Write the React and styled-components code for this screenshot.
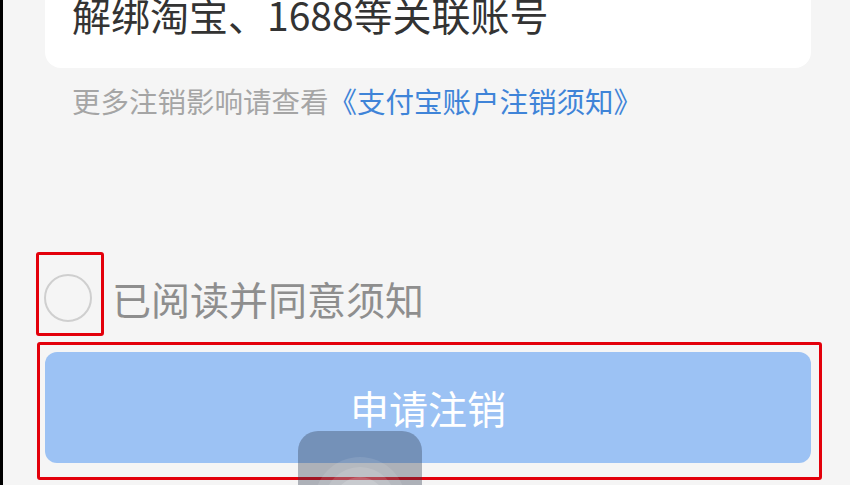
import styled, { createGlobalStyle } from "styled-components";

const GlobalStyle = createGlobalStyle`
  html, body {
    margin: 0;
    padding: 0;
    background: #000;
  }
  body {
    font-family: "Noto Sans CJK SC", "Noto Sans", sans-serif;
  }
`;

const Page = styled.div`
  position: relative;
  width: 847px;
  height: 485px;
  margin-left: 3px;
  background: #f5f5f5;
  overflow: hidden;
  display: flex;
  flex-direction: column;
`;

const Card = styled.div`
  margin-left: 42px;
  width: 766px;
  height: 68px;
  box-sizing: border-box;
  padding-left: 27px;
  background: #fff;
  border-radius: 0 0 16px 16px;
  overflow: hidden;
`;

const CardText = styled.div`
  margin-top: -9px;
  font-size: 39px;
  line-height: 46px;
  color: #333;
  white-space: nowrap;
`;

const Notice = styled.div`
  margin: 15px 0 0 69px;
  font-size: 28.5px;
  line-height: 36px;
  color: #a5a5a5;
  white-space: nowrap;
`;

const Link = styled.span`
  color: #3f84d8;
`;

const AgreeRow = styled.div`
  margin: 133px 0 0 33px;
  display: flex;
  align-items: center;
  gap: 8px;
`;

const Highlight = styled.div`
  box-sizing: border-box;
  border: 3px solid #e3000b;
  border-radius: 3px;
`;

const CheckBox = styled(Highlight)`
  width: 68px;
  height: 84px;
  display: flex;
  align-items: center;
  justify-content: center;
  padding: 8px 4px 0 0;
`;

const Circle = styled.div`
  width: 48px;
  height: 48px;
  box-sizing: border-box;
  border-radius: 50%;
  border: 2px solid #cfcfcf;
`;

const AgreeText = styled.span`
  font-size: 39px;
  line-height: 46px;
  color: #8e8e8e;
  margin-top: 8px;
`;

const ButtonFrame = styled(Highlight)`
  margin: 6px 0 0 34px;
  width: 785px;
  height: 138px;
  padding: 7px 8px 14px 5px;
`;

const SubmitButton = styled.button`
  width: 100%;
  height: 100%;
  border: none;
  border-radius: 12px;
  background: #9cc2f4;
  color: #fff;
  font-family: "Noto Sans CJK SC", "Noto Sans", sans-serif;
  font-size: 39px;
  line-height: 46px;
  padding: 0;
  padding-bottom: 2px;
`;

const FloatBall = styled.div`
  position: absolute;
  left: 295px;
  top: 431px;
  width: 124px;
  height: 80px;
  border-radius: 20px;
  background: rgba(48, 58, 78, 0.36);
  overflow: hidden;
`;

const Rings = () => (
  <svg width="124" height="80" viewBox="0 0 124 80">
    <circle cx="62" cy="72" r="46" fill="rgba(255,255,255,0.10)" />
    <circle cx="62" cy="72" r="36" fill="rgba(255,255,255,0.12)" />
    <circle cx="62" cy="72" r="26" fill="rgba(255,255,255,0.16)" />
  </svg>
);

const App = () => {
  return (
    <>
      <GlobalStyle />
      <Page>
        <Card>
          <CardText>解绑淘宝、1688等关联账号</CardText>
        </Card>
        <Notice>
          更多注销影响请查看<Link>《支付宝账户注销须知》</Link>
        </Notice>
        <AgreeRow>
          <CheckBox>
            <Circle />
          </CheckBox>
          <AgreeText>已阅读并同意须知</AgreeText>
        </AgreeRow>
        <ButtonFrame>
          <SubmitButton>申请注销</SubmitButton>
        </ButtonFrame>
        <FloatBall>
          <Rings />
        </FloatBall>
      </Page>
    </>
  );
};

export default App;
